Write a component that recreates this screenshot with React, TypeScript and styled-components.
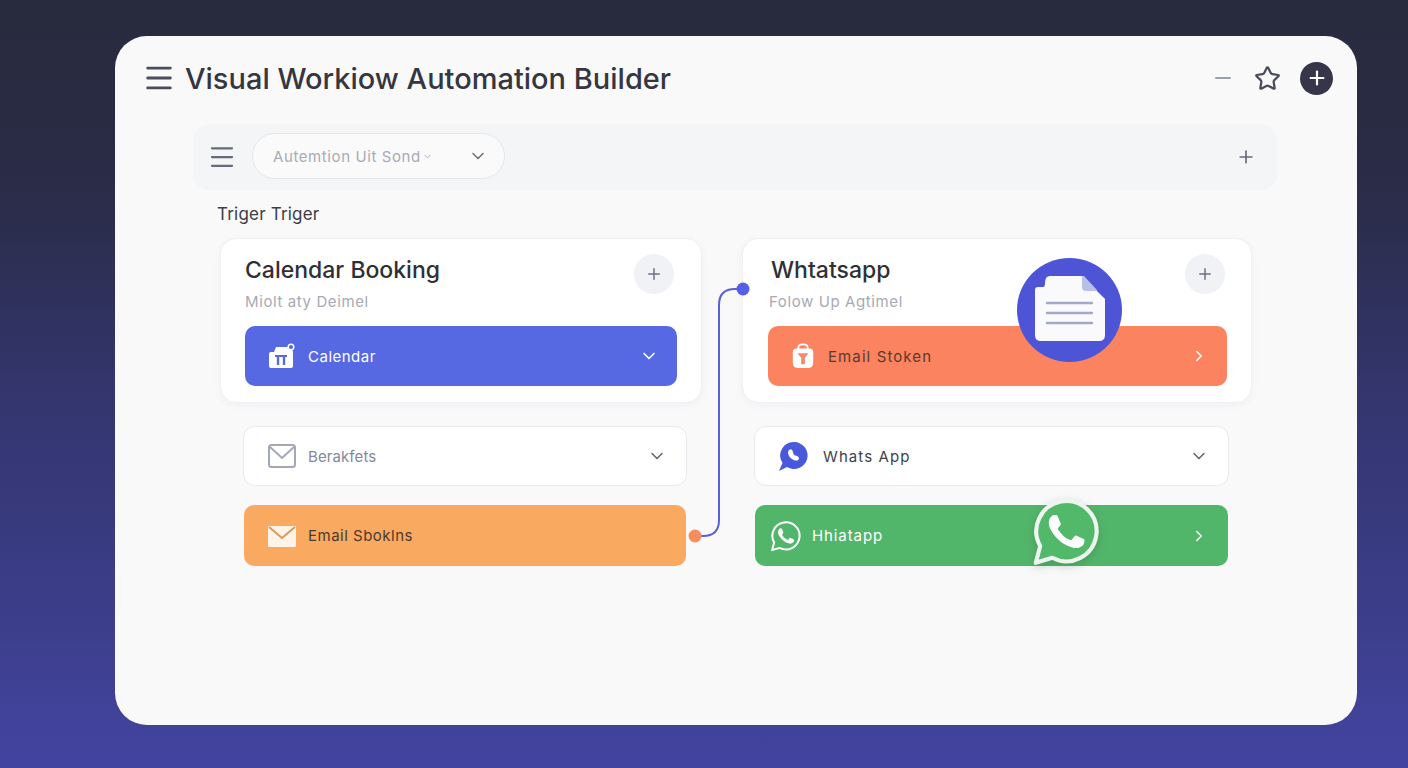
import React from "react";
import styled, {createGlobalStyle} from "styled-components";
import {Menu, Minus, Star, Plus, ChevronDown, ChevronRight} from "lucide-react";

const GlobalStyle = createGlobalStyle`
  html, body { margin: 0; padding: 0; height: 100%; }
  body { font-family: "Inter", "Liberation Sans", sans-serif; }
`

const Page = styled.div`
  box-sizing: border-box;
  width: 1408px;
  height: 768px;
  overflow: hidden;
  padding: 36px 51px 43px 115px;
  background: linear-gradient(180deg, #282a3d 0%, #2a2c48 25%, #33356c 50%, #3a3c85 75%, #4344a0 100%);
`

const Window = styled.div`
  position: relative;
  height: 100%;
  border-radius: 32px;
  background: #f9f9fa;
  padding: 20px 0 0 0;
  box-sizing: border-box;
`

const Header = styled.div`
  display: flex;
  align-items: center;
  height: 44px;
  padding: 0 24px 0 27px;
`

const Title = styled.h1`
  margin: 0 0 0 9px;
  font-size: 29px;
  font-weight: 500;
  color: #35363f;
  white-space: nowrap;
  flex: 1;
`

const HeaderTools = styled.div`
  display: flex;
  align-items: center;
  gap: 19px;
  color: #4a4b5a;
`

const DarkRound = styled.span`
  display: flex;
  align-items: center;
  justify-content: center;
  width: 33px;
  height: 33px;
  border-radius: 50%;
  background: #37354a;
  color: #fff;
`

const Toolbar = styled.div`
  display: flex;
  align-items: center;
  height: 66px;
  margin: 24px 80px 0 78px;
  padding: 0 21px 0 14px;
  border-radius: 16px;
  background: #f4f5f7;
  color: #666a7c;
`

const Select = styled.div`
  display: flex;
  align-items: center;
  width: 253px;
  height: 46px;
  box-sizing: border-box;
  margin: 0 0 2px 15px;
  padding: 0 16px 0 20px;
  border: 1px solid #e5e7ed;
  border-radius: 23px;
  background: #fafafb;
  color: #a8abb5;
  font-size: 15px;
  letter-spacing: 0.6px;
  white-space: nowrap;
`

const SelectText = styled.span`
  flex: 1;
  display: flex;
  align-items: center;
  gap: 1px;
`

const ToolbarSpacer = styled.div`
  flex: 1;
`

const SectionLabel = styled.div`
  margin: 14px 0 0 102px;
  height: 20px;
  line-height: 20px;
  font-size: 17px;
  letter-spacing: 0.2px;
  color: #3c3d46;
`

const Board = styled.div`
  display: grid;
  grid-template-columns: 482px 510px;
  column-gap: 40px;
  margin: 14px 0 0 105px;
`

const Column = styled.div`
  display: flex;
  flex-direction: column;
`

const Card = styled.div`
  box-sizing: border-box;
  height: 165px;
  padding: 15px 24px 0 ${p => p.$inset ?? 24}px;
  border: 1px solid #f0f0f4;
  border-radius: 16px;
  background: #fff;
  box-shadow: 0 2px 8px rgba(60, 60, 90, 0.04);
`

const CardHead = styled.div`
  display: flex;
  justify-content: space-between;
  height: 72px;
  padding-right: ${p => p.$inset ?? 3}px;
`

const CardTitle = styled.div`
  height: 32px;
  line-height: 32px;
  padding-left: ${p => p.$shift ?? 0}px;
  font-size: 23px;
  font-weight: 500;
  color: #2f3036;
`

const CardSub = styled.div`
  margin-top: 6px;
  height: 20px;
  line-height: 20px;
  padding-left: ${p => p.$shift ?? 0}px;
  font-size: 15px;
  letter-spacing: 0.6px;
  color: #a8aab3;
`

const RoundPlus = styled.span`
  display: flex;
  align-items: center;
  justify-content: center;
  width: 40px;
  height: 40px;
  border-radius: 50%;
  background: #f1f2f6;
  color: #6d7083;
`

const Bar = styled.div`
  display: flex;
  align-items: center;
  height: ${p => p.$height ?? 60}px;
  box-sizing: border-box;
  margin: ${p => p.$margin ?? "0"};
  padding: ${p => p.$padding ?? "0 18px 0 23px"};
  border-radius: 10px;
  background: ${p => p.$bg};
  color: ${p => p.$color ?? "#fff"};
  font-size: 15px;
  white-space: nowrap;
`

const LightRow = styled.div`
  display: flex;
  align-items: center;
  height: 60px;
  box-sizing: border-box;
  margin: ${p => p.$margin};
  padding: 0 19px 0 23px;
  border: 1px solid #e9eaef;
  border-radius: 12px;
  background: #fff;
  color: ${p => p.$color ?? "#85889a"};
  font-size: 15px;
`

const RowLabel = styled.span`
  flex: 1;
  margin-left: ${p => p.$gap ?? 12}px;
  letter-spacing: ${p => p.$track ?? 0}px;
`

const Connector = styled.svg`
  position: absolute;
  left: 570px;
  top: 244px;
`

const DocBadge = styled.div`
  position: absolute;
  left: 902px;
  top: 222px;
  width: 105px;
  height: 104px;
  border-radius: 50%;
  background: #4d55d6;
  display: flex;
  align-items: center;
  justify-content: center;
`

const DocSvg = styled.svg`
  margin-bottom: 2px;
`

const WaBadge = styled.svg`
  position: absolute;
  left: 916px;
  top: 460px;
  filter: drop-shadow(0 3px 5px rgba(30, 60, 40, 0.22));
`

const PHONE = "M17.472 14.382c-.297-.149-1.758-.867-2.03-.967-.273-.099-.471-.148-.67.15-.197.297-.767.966-.94 1.164-.173.199-.347.223-.644.075-.297-.15-1.255-.463-2.39-1.475-.883-.788-1.48-1.761-1.653-2.059-.173-.297-.018-.458.13-.606.134-.133.298-.347.446-.52.149-.174.198-.298.298-.497.099-.198.05-.371-.025-.52-.075-.149-.669-1.612-.916-2.207-.242-.579-.487-.5-.669-.51-.173-.008-.371-.01-.57-.01-.198 0-.52.074-.792.372-.272.297-1.04 1.016-1.04 2.479 0 1.462 1.065 2.875 1.213 3.074.149.198 2.096 3.2 5.077 4.487.709.306 1.262.489 1.694.625.712.227 1.36.195 1.871.118.571-.085 1.758-.719 2.006-1.413.248-.694.248-1.289.173-1.413-.074-.124-.272-.198-.57-.347z"
const BUBBLE = "M1.6 22.6 L3.1 16.9 A10.2 10.2 0 1 1 7.2 20.9 Z"

const CalendarIcon = () => (
  <svg width="28" height="26" viewBox="0 0 28 26">
    <path d="M3 9 L6 9 L8 4 L20 4 L25 8 V23 Q25 25 23 25 H3 Q1 25 1 23 V11 Q1 9 3 9 Z" fill="#fff" />
    <path d="M7 13 H19" stroke="#5a68e2" strokeWidth="2" />
    <path d="M10 13 V22 M16 13 V22" stroke="#5a68e2" strokeWidth="2.4" />
    <circle cx="23" cy="4" r="2.8" fill="#5668e2" stroke="#fff" strokeWidth="1.5" />
  </svg>
)

const BagIcon = () => (
  <svg width="24" height="26" viewBox="0 0 24 28">
    <path d="M7 7 V5 Q7 1.5 12 1.5 Q17 1.5 17 5 V7" fill="none" stroke="#fff" strokeWidth="2" />
    <path d="M5 6 H19 Q23 6 23 10 V21 Q23 27 17 27 H7 Q1 27 1 21 V10 Q1 6 5 6 Z" fill="#fff" />
    <path d="M6 11 H18 L14 16 V23 H10 V16 Z" fill="#f58a68" />
  </svg>
)

const EnvelopeIcon = () => (
  <svg width="30" height="24" viewBox="0 0 30 24">
    <rect x="1" y="2" width="28" height="21" rx="1" fill="#fdf3e6" />
    <path d="M2 3 L15 14 L28 3" fill="none" stroke="#d99a5c" strokeWidth="2" />
  </svg>
)

const MailOutline = () => (
  <svg width="30" height="26" viewBox="0 0 30 26">
    <rect x="2" y="2" width="26" height="22" rx="2.5" fill="none" stroke="#a3a7b8" strokeWidth="2" />
    <path d="M3 4 L15 15 L27 4" fill="none" stroke="#a3a7b8" strokeWidth="2" />
  </svg>
)

const BlueChat = () => (
  <svg width="30" height="32" viewBox="0 0 30 32">
    <path d="M16 2 A13.5 13.5 0 1 1 9 27 L1 31 L4.5 23 A13.5 13.5 0 0 1 16 2 Z" fill="#4a58dc" />
    <path d="M11 10 Q14 8 15 12 Q15 14 17 15.5 Q20 15 21 18 Q21 21 17 20.5 Q11 18.5 10 13 Q10 11 11 10 Z" fill="#fff" />
  </svg>
)

const SmallWa = () => (
  <svg width="32" height="32" viewBox="0 0 24 24">
    <path d={BUBBLE} fill="none" stroke="#fff" strokeWidth="1.5" strokeLinejoin="round" />
    <path d={PHONE} fill="#fff" />
  </svg>
)

const DocIcon = () => (
  <DocSvg width="72" height="68" viewBox="0 0 72 68">
    <path d="M4 12 H9 Q11 12 11 8 Q11 1 16 1 H48 L71 24 V60 Q71 66 65 66 H7 Q1 66 1 60 V15 Q1 12 4 12 Z" fill="#fafafd" />
    <path d="M48 1 H50 L63 15 V16 H52 Q48 16 48 12 Z" fill="#b8bfe8" />
    <path d="M13 28 H58 M13 38 H58 M13 48 H58" stroke="#a3a9c8" strokeWidth="2.4" strokeLinecap="round" />
  </DocSvg>
)

const App = () => (
  <Page>
    <GlobalStyle />
    <Window>
      <Header>
        <Menu size={34} strokeWidth={2} color="#4c4d5c" />
        <Title>Visual Workiow Automation Builder</Title>
        <HeaderTools>
          <Minus size={24} color="#9aa0a8" />
          <Star size={27} strokeWidth={2} />
          <DarkRound><Plus size={22} strokeWidth={2.4} /></DarkRound>
        </HeaderTools>
      </Header>

      <Toolbar>
        <Menu size={30} strokeWidth={1.8} />
        <Select>
          <SelectText>Autemtion Uit Sond<ChevronDown size={11} /></SelectText>
          <ChevronDown size={20} color="#6a6d7c" strokeWidth={1.8} />
        </Select>
        <ToolbarSpacer />
        <Plus size={20} strokeWidth={2} />
      </Toolbar>

      <SectionLabel>Triger Triger</SectionLabel>

      <Board>
        <Column>
          <Card>
            <CardHead>
              <div>
                <CardTitle>Calendar Booking</CardTitle>
                <CardSub>Miolt aty Deimel</CardSub>
              </div>
              <RoundPlus><Plus size={18} strokeWidth={2} /></RoundPlus>
            </CardHead>
            <Bar $bg="#5668e2">
              <CalendarIcon />
              <RowLabel $gap={12} $track={0.5}>Calendar</RowLabel>
              <ChevronDown size={20} strokeWidth={2} />
            </Bar>
          </Card>
          <LightRow $margin="23px 15px 0 23px">
            <MailOutline />
            <RowLabel $gap={11} $track={0.1}>Berakfets</RowLabel>
            <ChevronDown size={20} color="#5f6272" strokeWidth={1.8} />
          </LightRow>
          <Bar $bg="#faa961" $color="#4a3b30" $height={61} $margin="19px 16px 0 24px" $padding="0 20px 0 23px">
            <EnvelopeIcon />
            <RowLabel $gap={11} $track={0.5}>Email Sboklns</RowLabel>
          </Bar>
        </Column>

        <Column>
          <Card $inset={25}>
            <CardHead $inset={2}>
              <div>
                <CardTitle $shift={3}>Whtatsapp</CardTitle>
                <CardSub $shift={1}>Folow Up Agtimel</CardSub>
              </div>
              <RoundPlus><Plus size={18} strokeWidth={2} /></RoundPlus>
            </CardHead>
            <Bar $bg="#fb8360" $color="#5a3a30" $padding="0 19px 0 23px">
              <BagIcon />
              <RowLabel $gap={13} $track={1.1}>Email Stoken</RowLabel>
              <ChevronRight size={18} color="#fff" strokeWidth={2} />
            </Bar>
          </Card>
          <LightRow $margin="23px 23px 0 12px" $color="#3e414e">
            <BlueChat />
            <RowLabel $gap={15} $track={1.1}>Whats App</RowLabel>
            <ChevronDown size={20} color="#5f6272" strokeWidth={1.8} />
          </LightRow>
          <Bar $bg="#52b66a" $height={61} $margin="19px 24px 0 13px" $padding="0 20px 0 15px">
            <SmallWa />
            <RowLabel $gap={10} $track={0.9}>Hhiatapp</RowLabel>
            <ChevronRight size={18} strokeWidth={2} />
          </Bar>
        </Column>
      </Board>

      <Connector width="70" height="265" viewBox="0 0 70 265">
        <path d="M10 256 H18 Q34 256 34 240 V25 Q34 9 50 9 H58" fill="none" stroke="#5a60d8" strokeWidth="2" />
        <circle cx="10" cy="256" r="6.5" fill="#f78c5c" />
        <circle cx="58" cy="9" r="6.5" fill="#5560e8" />
      </Connector>

      <DocBadge><DocIcon /></DocBadge>

      <WaBadge width="71" height="73" viewBox="0 0 24 24.7">
        <path d={BUBBLE} fill="#52b86a" stroke="#eef5ee" strokeWidth="1.4" strokeLinejoin="round" />
        <path d={PHONE} fill="#fff" />
      </WaBadge>
    </Window>
  </Page>
)

export default App
